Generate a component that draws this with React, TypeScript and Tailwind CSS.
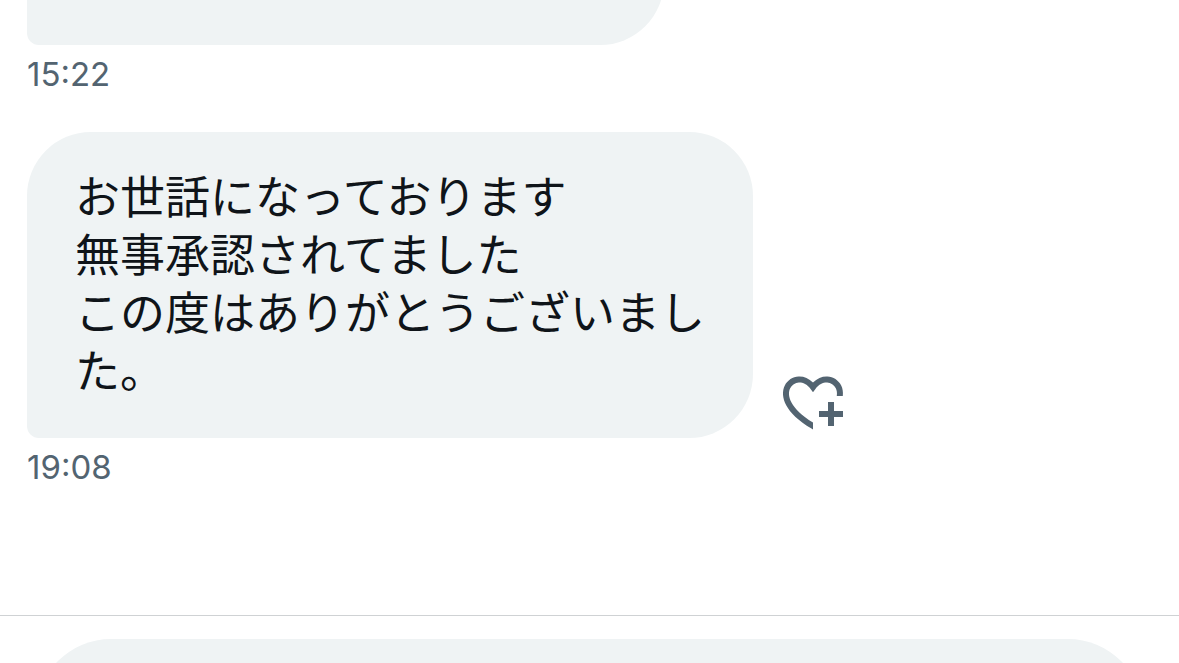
import React from 'react';

interface Message {
  id: number;
  text: string;
  time: string;
}

const messages: Message[] = [
  {
    id: 2,
    text: 'お世話になっております\n無事承認されてました\nこの度はありがとうございました。',
    time: '19:08',
  },
];

const HeartPlusIcon: React.FC = () => (
  <svg viewBox="0 0 24 24" className="size-[72px]" fill="currentColor" aria-hidden="true">
    <path d="M17 12v3h-2.998v2h3v3h2v-3h3v-2h-3v-3h-2zm-5 6.839c-3.871-2.34-6.053-4.639-7.127-6.609-1.112-2.04-1.031-3.7-.479-4.82.561-1.13 1.667-1.84 2.91-1.91 1.222-.06 2.68.51 3.892 2.16l.806 1.09.805-1.09c1.211-1.65 2.668-2.22 3.89-2.16 1.242.07 2.347.78 2.908 1.91.334.677.49 1.554.321 2.59h2.011c.153-1.283-.039-2.469-.539-3.48-.887-1.79-2.647-2.91-4.601-3.01-1.65-.09-3.367.56-4.796 2.01-1.43-1.45-3.147-2.1-4.798-2.01-1.954.1-3.714 1.22-4.601 3.01-.896 1.81-.846 4.17.514 6.67 1.353 2.48 4.003 5.12 8.382 7.67l.502.299v-2.32z" />
  </svg>
);

const Timestamp: React.FC<{ time: string }> = ({ time }) => (
  <time className="mt-[9px] block text-[33px] leading-10 text-[#536471]">{time}</time>
);

const App: React.FC = () => {
  return (
    <div className="flex h-screen flex-col overflow-hidden bg-white font-['Inter','Noto_Sans_CJK_JP',sans-serif]">
      {/* Conversation, scrolled to the newest message */}
      <main className="flex min-h-0 flex-1 flex-col justify-end gap-[38px] overflow-hidden px-[27px] pb-32">
        <article className="shrink-0">
          <div className="h-32 w-[637px] max-w-full rounded-[64px] rounded-bl-xl bg-[#eff3f4]" />
          <Timestamp time="15:22" />
        </article>

        {messages.map((message) => (
          <article key={message.id} className="shrink-0">
            <div className="flex items-end gap-6">
              <p
                lang="ja"
                className="max-w-[726px] whitespace-pre-line rounded-[64px] rounded-bl-xl bg-[#eff3f4] px-12 py-[37px] text-[45px] leading-[58px] text-[#0f1419]"
              >
                {message.text}
              </p>
              <button type="button" aria-label="リアクションを追加" className="shrink-0 text-[#536471]">
                <HeartPlusIcon />
              </button>
            </div>
            <Timestamp time={message.time} />
          </article>
        ))}
      </main>

      {/* Composer */}
      <footer className="h-12 shrink-0 overflow-hidden border-t border-[#cfd2d4] px-9 pt-[23px]">
        <textarea
          aria-label="メッセージを作成"
          className="block h-[150px] w-full resize-none rounded-[75px] bg-[#eff3f4] px-12 py-10 text-[45px] outline-none"
        />
      </footer>
    </div>
  );
};

export default App;
